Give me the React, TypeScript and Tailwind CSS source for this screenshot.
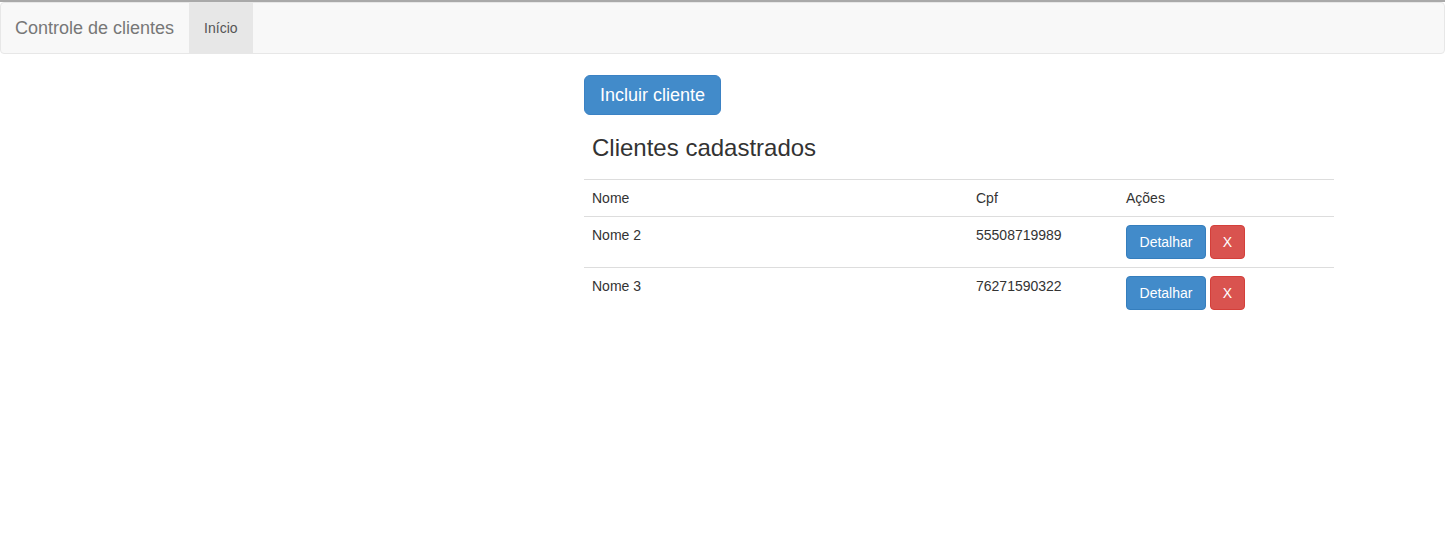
const clientes = [
  { id: 2, nome: "Nome 2", cpf: "55508719989" },
  { id: 3, nome: "Nome 3", cpf: "76271590322" },
];

export default function App() {
  return (
    <div className="min-h-screen bg-white text-[#333] font-['Liberation_Sans',Arial,sans-serif] text-[14px] border-t-2 border-[#a9a9a9]">
      <nav className="flex h-[52px] bg-[#f8f8f8] border border-[#e7e7e7] rounded-[4px]">
        <span className="pl-[14px] pr-[15px] leading-[50px] text-[18px] text-[#777]">Controle de clientes</span>
        <a className="px-[15px] leading-[50px] text-[14px] text-[#555] bg-[#e7e7e7]">Início</a>
      </nav>

      <main className="w-[750px] ml-[584px] pt-[21px]">
        <button className="h-[40px] px-[15px] rounded-[6px] bg-[#428bca] border border-[#3b82c4] text-white text-[18px]">
          Incluir cliente
        </button>
        <h3 className="mt-[18px] mb-[16px] px-[8px] text-[24px] leading-[30px]">Clientes cadastrados</h3>

        <table className="w-full border-collapse">
          <thead>
            <tr className="border-t border-[#ddd]">
              <th className="w-[384px] px-[8px] py-[8px] text-left font-normal leading-[20px]">Nome</th>
              <th className="w-[150px] px-[8px] py-[8px] text-left font-normal leading-[20px]">Cpf</th>
              <th className="px-[8px] py-[8px] text-left font-normal leading-[20px]">Ações</th>
            </tr>
          </thead>
          <tbody>
            {clientes.map(c => (
              <tr key={c.id} className="border-t border-[#ddd]">
                <td className="px-[8px] py-[8px] align-top leading-[20px]">{c.nome}</td>
                <td className="px-[8px] py-[8px] align-top leading-[20px]">{c.cpf}</td>
                <td className="px-[8px] py-[8px] align-top">
                  <div className="flex gap-[4px]">
                    <button className="w-[80px] h-[34px] rounded-[4px] bg-[#428bca] border border-[#357ebd] text-white text-[14px]">Detalhar</button>
                    <button className="w-[35px] h-[34px] rounded-[4px] bg-[#d9534f] border border-[#d43f3a] text-white text-[14px]">X</button>
                  </div>
                </td>
              </tr>
            ))}
          </tbody>
        </table>
      </main>
    </div>
  );
}
